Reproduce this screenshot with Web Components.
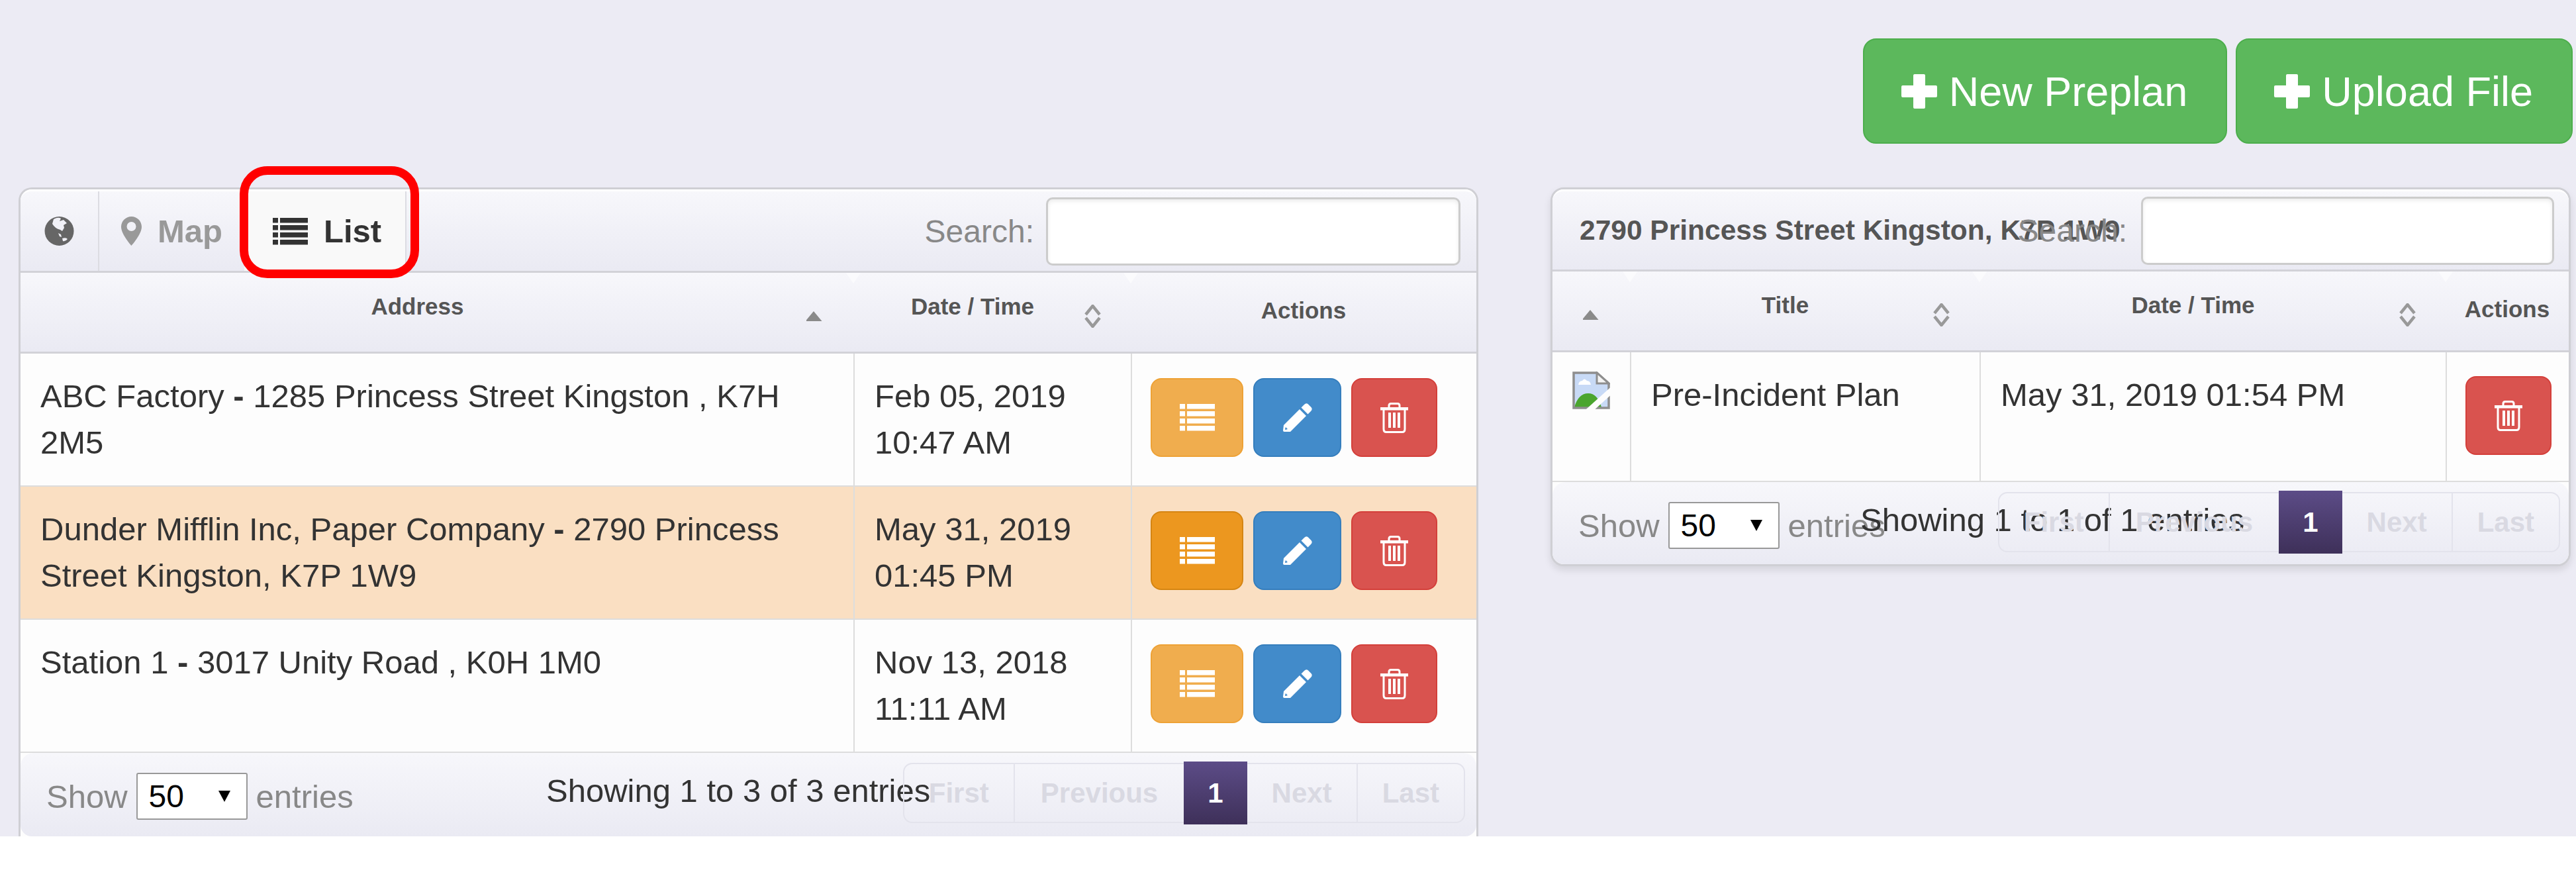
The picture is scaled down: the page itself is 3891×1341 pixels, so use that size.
<!DOCTYPE html>
<html>
<head>
<meta charset="utf-8">
<title>Preplans</title>
<style>
  html, body { margin: 0; background: #fff; }
  body { font-family: "Liberation Sans", Arial, sans-serif; color: #333; }
</style>
</head>
<body>
<pp-page>
  <pp-actions>
    <pp-green><pp-icon name="plus"></pp-icon>New Preplan</pp-green>
    <pp-green><pp-icon name="plus"></pp-icon>Upload File</pp-green>
  </pp-actions>
  <pp-columns>
    <pp-panel style="--w: 2205px; --cols: 1258px 419px 1fr; --row-h: 201px">
      <pp-toolbar slot="toolbar" style="--h: 126px">
        <pp-tab kind="globe"><pp-icon name="globe"></pp-icon></pp-tab>
        <pp-tab kind="map"><pp-icon name="pin"></pp-icon>Map</pp-tab>
        <pp-tab kind="list" active><pp-icon name="list"></pp-icon>List</pp-tab>
        <pp-search></pp-search>
      </pp-toolbar>
      <pp-row head style="--h: 122px">
        <pp-th sort="asc">Address</pp-th>
        <pp-th sort="both">Date / Time</pp-th>
        <pp-th>Actions</pp-th>
      </pp-row>
      <pp-row>
        <pp-td>ABC Factory <b>-</b> 1285 Princess Street Kingston , K7H<br>2M5</pp-td>
        <pp-td>Feb 05, 2019 10:47 AM</pp-td>
        <pp-td buttons><pp-act kind="list"></pp-act><pp-act kind="edit"></pp-act><pp-act kind="trash"></pp-act></pp-td>
      </pp-row>
      <pp-row selected>
        <pp-td>Dunder Mifflin Inc, Paper Company <b>-</b> 2790 Princess<br>Street Kingston, K7P 1W9</pp-td>
        <pp-td>May 31, 2019 01:45 PM</pp-td>
        <pp-td buttons><pp-act kind="list" pressed></pp-act><pp-act kind="edit"></pp-act><pp-act kind="trash"></pp-act></pp-td>
      </pp-row>
      <pp-row>
        <pp-td>Station 1 <b>-</b> 3017 Unity Road , K0H 1M0</pp-td>
        <pp-td>Nov 13, 2018 11:11 AM</pp-td>
        <pp-td buttons><pp-act kind="list"></pp-act><pp-act kind="edit"></pp-act><pp-act kind="trash"></pp-act></pp-td>
      </pp-row>
      <pp-footer slot="footer" style="--info-left: 794px; --pager-right: 17px; --h: 126px">
        <pp-length></pp-length>
        <pp-info>Showing 1 to 3 of 3 entries</pp-info>
        <pp-pager></pp-pager>
      </pp-footer>
    </pp-panel>

    <pp-panel closed style="--w: 1541px; --cols: 117px 528px 704px 1fr; --row-h: 196px">
      <pp-toolbar slot="toolbar" style="--h: 124px">
        <pp-title>2790 Princess Street Kingston, K7P 1W9</pp-title>
        <pp-search overlap></pp-search>
      </pp-toolbar>
      <pp-row head style="--h: 122px">
        <pp-th sort="asc"></pp-th>
        <pp-th sort="both">Title</pp-th>
        <pp-th sort="both">Date / Time</pp-th>
        <pp-th tight>Actions</pp-th>
      </pp-row>
      <pp-row>
        <pp-td><pp-icon name="broken"></pp-icon></pp-td>
        <pp-td>Pre-Incident Plan</pp-td>
        <pp-td>May 31, 2019 01:54 PM</pp-td>
        <pp-td buttons tight><pp-act kind="trash"></pp-act></pp-td>
      </pp-row>
      <pp-footer slot="footer" style="--info-left: 465px; --pager-right: 13px; --h: 124px">
        <pp-length></pp-length>
        <pp-info>Showing 1 to 1 of 1 entries</pp-info>
        <pp-pager></pp-pager>
      </pp-footer>
    </pp-panel>
  </pp-columns>
</pp-page>

<script>
(function () {
  const icons = {
    plus: `<svg width="54" height="52" viewBox="0 0 54 52"><path fill="currentColor" d="M18 2q0-2 2-2h14q2 0 2 2v15h16q2 0 2 2v14q0 2-2 2H36v15q0 2-2 2H20q-2 0-2-2V35H2q-2 0-2-2V19q0-2 2-2h16z"/></svg>`,
    globe: `<svg width="45" height="44" viewBox="0 0 45 44"><circle cx="22.500" cy="22" r="22" fill="currentColor"/><path fill="#f1f1f7" d="M14 4Q21 0 25 3l-2 4 6-2 5 5-5 3 1 4-3 5-3-2Q16 18 12 11zM21 25l4 2 1 4-3-1zM27 33q6-2 8 1-3 4-7 3z"/></svg>`,
    pin: `<svg width="31" height="44" viewBox="0 0 31 44"><path fill="currentColor" fill-rule="evenodd" d="M15.500 0C7 0 0 7 0 15.500 0 27 15.500 44 15.500 44S31 27 31 15.500C31 7 24 0 15.500 0zm0 8a7 7 0 1 1 0 14 7 7 0 0 1 0-14z"/></svg>`,
    list: `<svg width="53" height="41" viewBox="0 0 53 41"><path fill="currentColor" d="M0 0h8v7.500H0zM11 0h42v7.500H11zM0 11h8v7.500H0zM11 11h42v7.500H11zM0 22h8v7.500H0zM11 22h42v7.500H11zM0 33h8v7.500H0zM11 33h42v7.500H11z"/></svg>`,
    edit: `<svg width="46" height="46" viewBox="0 0 46 46"><path fill="currentColor" fill-rule="evenodd" d="M2 34L26 10l10 10-24 24H3q-2 0-2-2zm3 3l-1 3q0 1 1 1l3-1z"/><path fill="currentColor" d="M28.500 7.500L33 3q3-3 6-.5L43.500 7q2.500 3-.5 6l-4.500 4.500z"/></svg>`,
    trash: `<svg width="42" height="46" viewBox="0 0 42 46"><g fill="none" stroke="currentColor" stroke-width="3"><path d="M13 7V4.500Q13 1.500 16 1.500H26Q29 1.500 29 4.500V7"/><path d="M5 11V40Q5 44.500 9 44.500H33Q37 44.500 37 40V11"/></g><path fill="currentColor" d="M0 7h42v4.500H0zM12 15h4v23h-4zM19 15h4v23h-4zM26 15h4v23h-4z"/></svg>`,
    broken: `<svg width="57" height="57" viewBox="0 0 57 57"><path fill="#c8daf6" d="M2 2h35l18 16v37H2z"/><path fill="#fff" d="M9 20q1-6 6-6 3-5 7 0 5 0 6 6z"/><path fill="#4aa52e" d="M3 54q6-21 21-21 14 0 20 21z"/><path fill="none" stroke="#8e8e8e" stroke-width="3.500" d="M2 2h35l18 16v37H2z"/><path fill="#f4f4f4" stroke="#8e8e8e" stroke-width="3" d="M37 2v16h18z"/><path fill="none" stroke="#fdfdfd" stroke-width="9" d="M62 26L22 62"/></svg>`,
    asc: `<svg width="27" height="35" viewBox="0 0 27 35"><path fill="#8a8a8a" d="M11 10L23.500 25h-25z"/></svg>`,
    both: `<svg width="27" height="35" viewBox="0 0 27 35"><path fill="none" stroke="#999" stroke-width="4.500" d="M3 15L13.500 2 24 15M3 20l10.500 13L24 20"/></svg>`
  }

  function define (name, html, setup) {
    window.customElements.define(name, class extends HTMLElement {
      constructor () {
        super()
        this.attachShadow({ mode: 'open' }).innerHTML = html
        if (setup) setup(this)
      }
    })
  }

  define('pp-icon', `<style>:host { display: inline-flex; flex: none; }</style><span style="display: inline-flex"></span>`, el => {
    el.shadowRoot.querySelector('span').innerHTML = icons[el.getAttribute('name')]
  })

  define('pp-page', `
    <style>
      :host {
        display: flex;
        flex-direction: column;
        height: 1263px;
        overflow: hidden;
        background: #ecebf4;
        padding: 58px 8px 0 28px;
        box-sizing: border-box;
      }
    </style>
    <slot></slot>`)

  define('pp-actions', `
    <style>
      :host { display: flex; justify-content: flex-end; gap: 13px; margin: 0 -3px 66px 0; }
    </style>
    <slot></slot>`)

  define('pp-green', `
    <style>
      :host {
        display: inline-flex;
        align-items: center;
        gap: 18px;
        height: 159px;
        box-sizing: border-box;
        padding: 0 58px 0 56px;
        background: #5cb85c;
        border: 2px solid #4cae4c;
        border-radius: 20px;
        color: #fff;
        font-size: 63px;
      }
    </style>
    <slot></slot>`)

  define('pp-columns', `
    <style>
      :host { display: flex; justify-content: space-between; align-items: flex-start; }
    </style>
    <slot></slot>`)

  define('pp-panel', `
    <style>
      :host {
        display: block;
        width: var(--w);
        box-sizing: border-box;
        border: 3px solid #cfcfd4;
        border-bottom: 0;
        border-radius: 20px 20px 0 0;
        background: #fdfdfd;
      }
      :host([closed]) {
        border-bottom: 3px solid #cfcfd4;
        border-radius: 20px;
        box-shadow: 0 6px 12px rgba(0, 0, 0, 0.1);
      }
    </style>
    <slot name="toolbar"></slot>
    <slot></slot>
    <slot name="footer"></slot>`)

  define('pp-toolbar', `
    <style>
      :host {
        display: flex;
        align-items: stretch;
        height: var(--h);
        box-sizing: border-box;
        border-top: 3px solid #fff;
        border-bottom: 3px solid #d2d2d8;
        border-radius: 17px 17px 0 0;
        background: linear-gradient(#f7f7fb, #eaeaf3);
      }
    </style>
    <slot></slot>`)

  define('pp-tab', `
    <style>
      :host {
        display: flex;
        align-items: center;
        position: relative;
        box-sizing: border-box;
        font-size: 49px;
        font-weight: bold;
        color: #999;
      }
      :host([kind=globe]) { width: 119px; padding-left: 36px; color: #666; border-right: 2px solid #dcdce2; }
      :host([kind=map]) { padding: 0 33px 0 33px; gap: 24px; }
      :host([kind=list]) { padding: 0 36px 0 43px; gap: 24px; color: #333; background: #f9f9f9; border-right: 2px solid #dcdce2; }
      :host([active])::after {
        content: '';
        position: absolute;
        left: -7px;
        right: -21px;
        top: -38px;
        bottom: -11px;
        border: 13px solid #f00;
        border-radius: 42px;
      }
    </style>
    <slot></slot>`)

  define('pp-title', `
    <style>
      :host { display: flex; align-items: center; padding-left: 41px; font-size: 42.5px; font-weight: bold; color: #555; white-space: nowrap; width: 0; }
    </style>
    <slot></slot>`)

  define('pp-search', `
    <style>
      :host {
        display: flex;
        align-items: center;
        gap: 18px;
        margin-left: auto;
        padding-right: 24px;
        font-size: 48px;
        color: #888;
      }
      input {
        width: 626px;
        height: 103px;
        box-sizing: border-box;
        border: 3px solid #ccc;
        border-radius: 10px;
        background: #fff;
        box-shadow: inset 0 3px 6px rgba(0, 0, 0, 0.08);
      }
      :host([overlap]) { gap: 21px; padding-right: 22px; }
      :host([overlap]) input { width: 624px; }
    </style>
    <span>Search:</span><input type="text">`)

  define('pp-row', `
    <style>
      :host {
        display: grid;
        grid-template-columns: var(--cols);
        min-height: var(--row-h);
        box-sizing: border-box;
        border-bottom: 2px solid #ddd;
        background: #fdfdfd;
      }
      :host([selected]) { background: #fadfc2; }
      :host([head]) {
        min-height: 0;
        height: var(--h);
        border-bottom: 3px solid #d2d2d8;
        background: linear-gradient(#f7f7fb, #eaeaf3);
      }
    </style>
    <slot></slot>`)

  define('pp-th', `
    <style>
      :host {
        display: flex;
        align-items: flex-start;
        position: relative;
        font-size: 35px;
        font-weight: bold;
        color: #555;
        white-space: nowrap;
      }
      :host(:not(:first-child))::before {
        content: '';
        position: absolute;
        left: -11px;
        top: 0;
        border: 11px solid transparent;
        border-top: 16px solid #fbfbfd;
        border-bottom: 0;
      }
      .label { flex: 1; text-align: center; line-height: 40px; padding-top: 31px; min-width: 0; }
      :host(:not([sort])) .label { padding-top: 37px; }
      .sort { margin: 48px 44px 0 -12px; height: 35px; }
      :host(:not([sort])) .sort { display: none; }
    </style>
    <span class="label"><slot></slot></span>
    <span class="sort"></span>`, el => {
    el.shadowRoot.querySelector('.sort').innerHTML = icons[el.getAttribute('sort')] || ''
  })

  define('pp-td', `
    <style>
      :host {
        display: block;
        box-sizing: border-box;
        padding: 29px 30px 0 30px;
        font-size: 49px;
        line-height: 70px;
        color: #333;
        min-width: 0;
      }
      :host(:not(:first-child)) { border-left: 2px solid #ddd; }
      :host([buttons]) { display: flex; gap: 15px; padding: 37px 0 0 28px; }
      :host([tight]) { padding-top: 36px; }
    </style>
    <slot></slot>`)

  define('pp-act', `
    <style>
      :host {
        display: flex;
        align-items: center;
        justify-content: center;
        flex: none;
        height: 119px;
        box-sizing: border-box;
        border: 2px solid;
        border-radius: 16px;
        color: #fff;
      }
      :host([kind=list]) { width: 140px; background: #f0ad4e; border-color: #eea236; }
      :host([kind=list][pressed]) { background: #ec971f; border-color: #d58512; }
      :host([kind=edit]) { width: 133px; background: #428bca; border-color: #357ebd; }
      :host([kind=trash]) { width: 130px; background: #d9534f; border-color: #d43f3a; }
    </style>
    <span style="display: inline-flex"></span>`, el => {
    el.shadowRoot.querySelector('span').innerHTML = icons[el.getAttribute('kind')]
  })

  define('pp-footer', `
    <style>
      :host {
        display: grid;
        grid-template: 1fr / 1fr;
        height: var(--h);
        box-sizing: border-box;
        border-radius: 20px 20px 17px 17px;
        background: linear-gradient(#f7f7fb, #eaeaf3);
        font-size: 49px;
      }
      ::slotted(*) { grid-area: 1 / 1; }
    </style>
    <slot></slot>`)

  define('pp-length', `
    <style>
      :host {
        display: flex;
        align-items: center;
        align-self: start;
        justify-self: start;
        gap: 13px;
        margin: 30px 0 0 39px;
        font-size: 49px;
        color: #888;
      }
      .select {
        display: flex;
        align-items: center;
        justify-content: space-between;
        width: 168px;
        height: 71px;
        box-sizing: border-box;
        padding: 0 24px 0 17px;
        border: 2px solid #999;
        border-radius: 3px;
        background: #fff;
        color: #000;
        font-size: 48px;
      }
      .select i { border: 9px solid transparent; border-top: 17px solid #000; border-bottom: 0; }
    </style>
    <span>Show</span><span class="select">50<i></i></span><span>entries</span>`)

  define('pp-info', `
    <style>
      :host {
        display: block;
        align-self: start;
        justify-self: start;
        margin: 29px 0 0 var(--info-left);
        color: #333;
        font-size: 49px;
        white-space: nowrap;
      }
    </style>
    <slot></slot>`)

  define('pp-pager', `
    <style>
      :host {
        display: flex;
        align-self: start;
        justify-self: end;
        margin: 15px var(--pager-right) 0 0;
        height: 91px;
        box-sizing: border-box;
        border: 2px solid #e3e3ec;
        border-radius: 14px;
        font-size: 42px;
        font-weight: bold;
        color: #d9d9e2;
      }
      span { display: flex; align-items: center; padding: 0 37px; }
      span + span { border-left: 2px solid #e3e3ec; }
      .prev { padding: 0 39px; }
      .current {
        margin: -4px 0;
        padding: 0 36px;
        border: 0;
        color: #fff;
        background: linear-gradient(#5c4c87, #3e3059);
      }
      .current + span { border-left: 0; }
    </style>
    <span>First</span><span class="prev">Previous</span><span class="current">1</span><span>Next</span><span>Last</span>`)
})()
</script>
</body>
</html>
